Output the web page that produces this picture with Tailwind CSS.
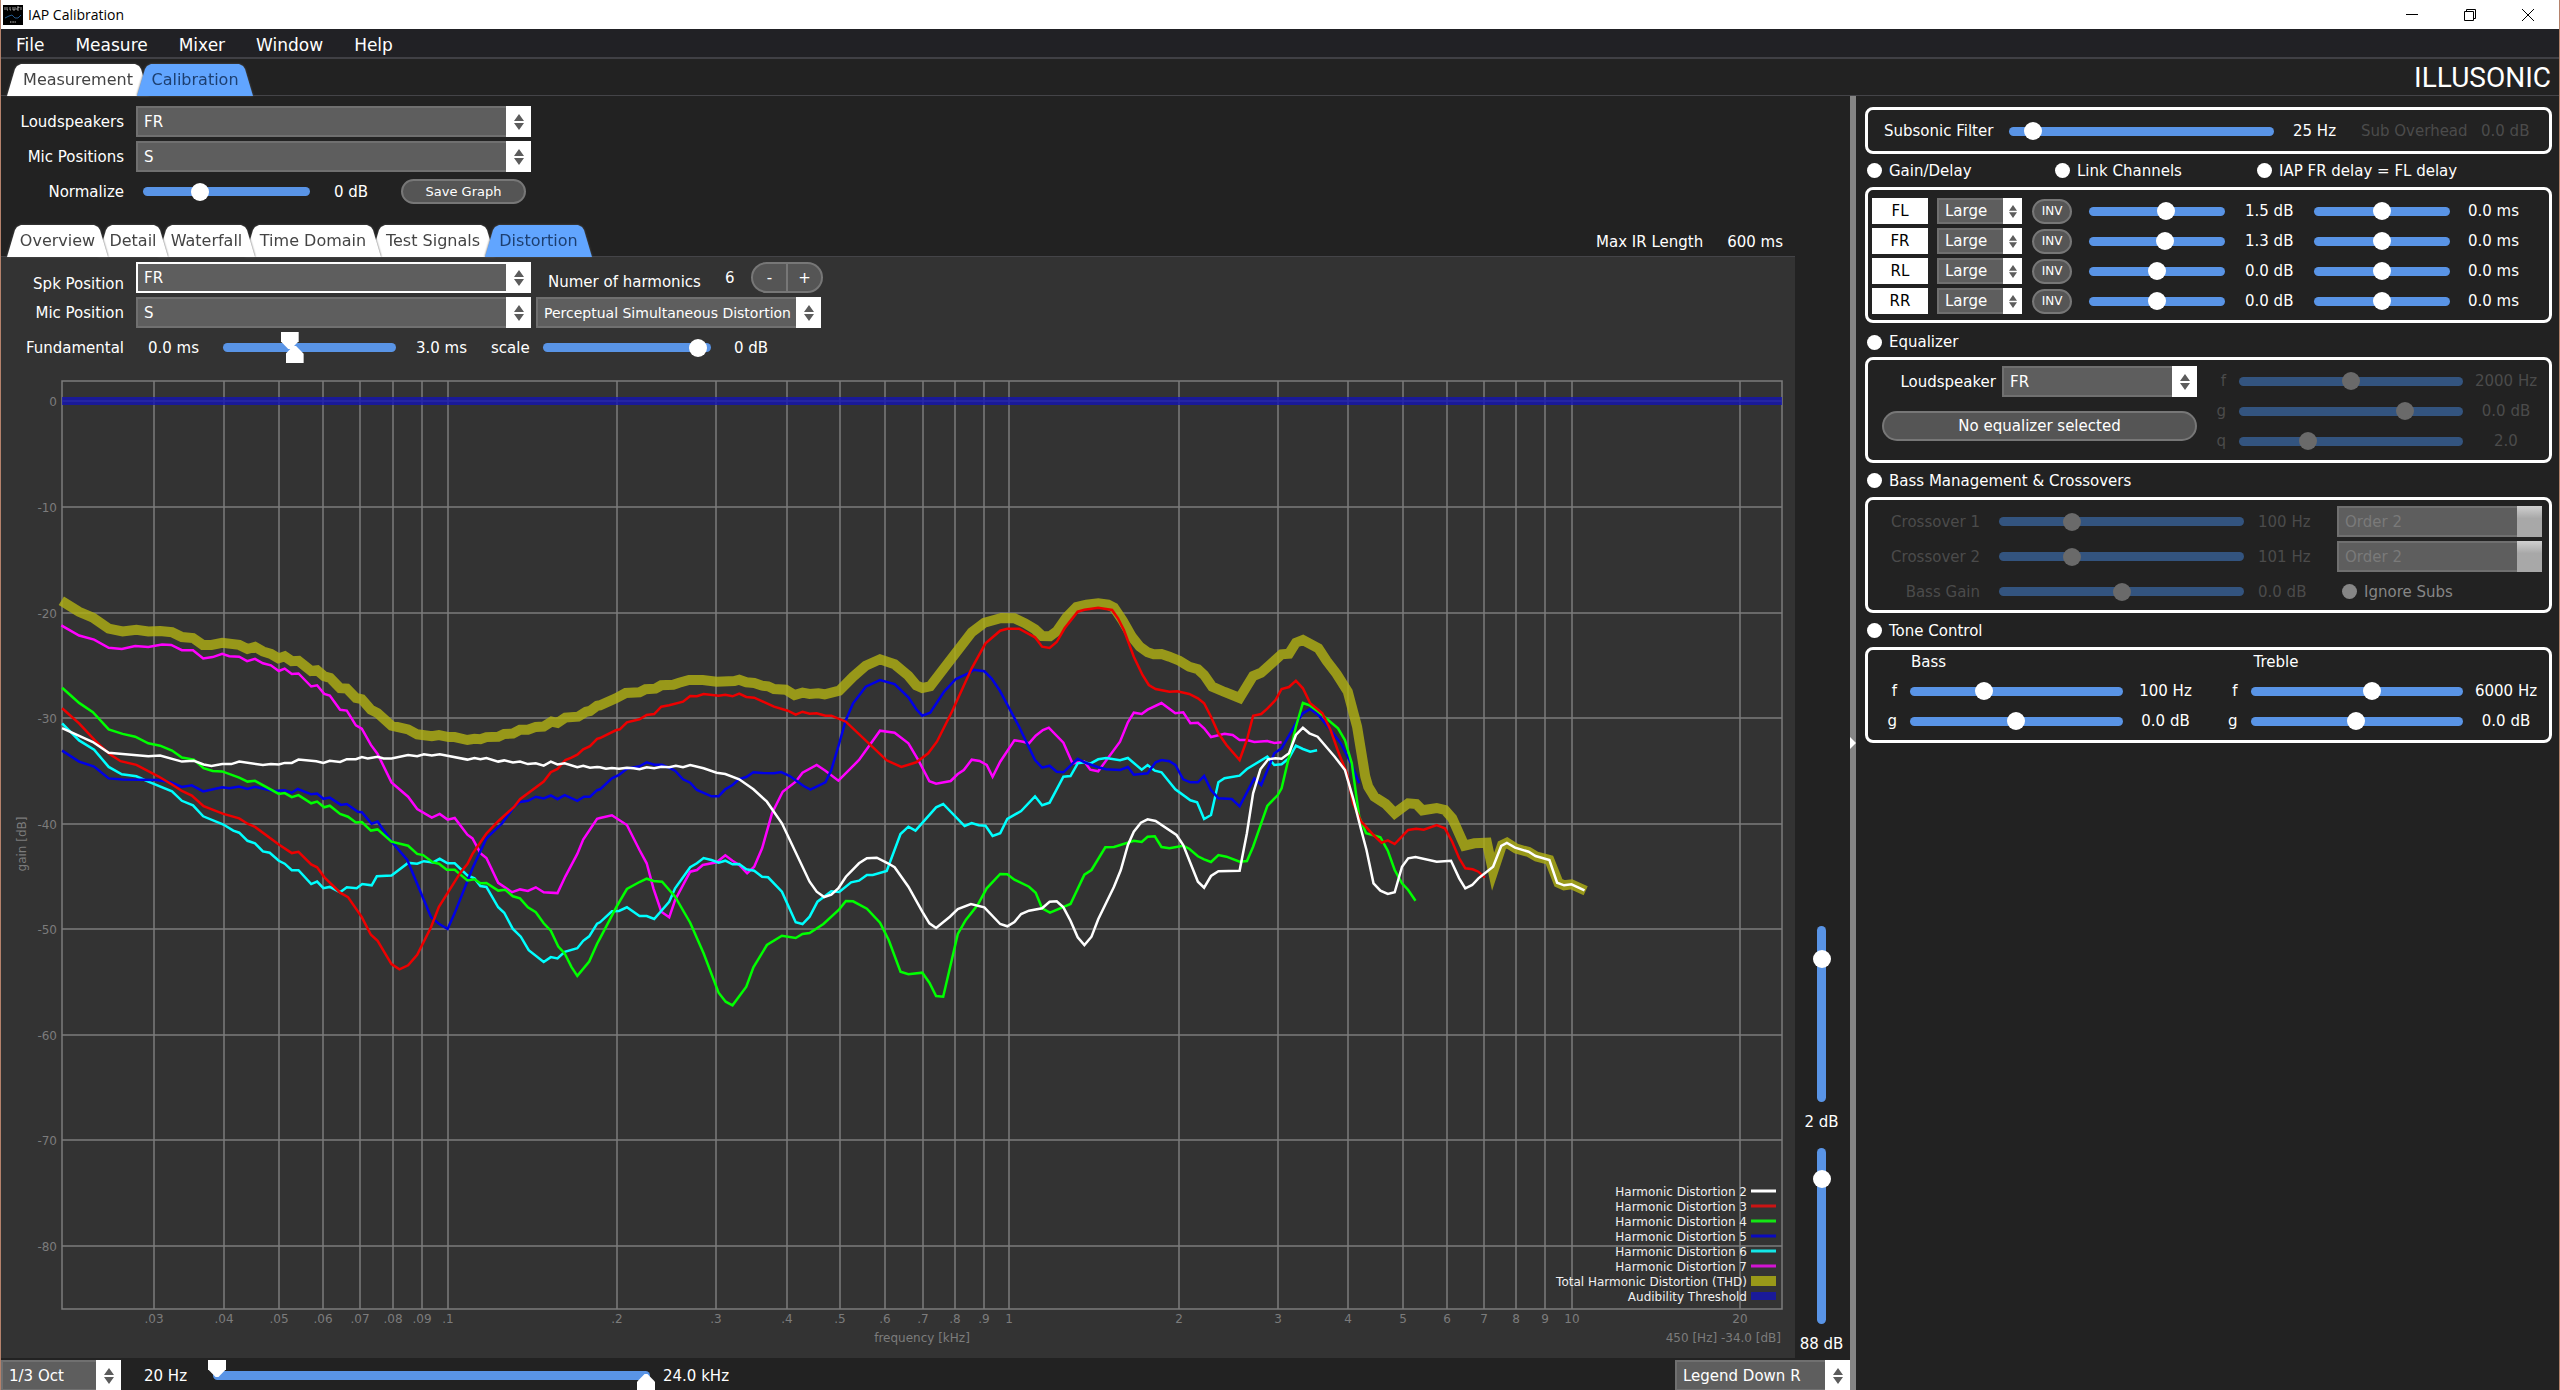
<!DOCTYPE html>
<html lang="en">
<head>
  <meta charset="UTF-8" />
  <title>IAP Calibration</title>
  <script src="https://cdn.jsdelivr.net/npm/@tailwindcss/browser@4"></script>
</head>
<body class="h-screen overflow-hidden flex flex-col bg-[#222222] text-white text-[15px] leading-5 font-['DejaVu_Sans',sans-serif] border-x border-[#b5826c]">

  <!-- Title bar -->
  <header class="h-[29px] shrink-0 bg-white text-black flex items-center pl-[2px] pr-[2px]">
    <svg class="size-5" viewBox="0 0 20 20">
      <rect width="20" height="20" fill="#000" />
      <path d="M2 2v3M4 2v3h1M7 2v3h1M10 2v3h2V2M14 2h2v1h-2v2h2M18 2v3" fill="none" stroke="#bbb" stroke-width=".8" />
      <path d="M2 13l4-2 3-1 3 3 3 0 3-3" fill="none" stroke="#2b6fb0" stroke-width=".8" />
      <path d="M7 17h6" stroke="#888" stroke-width="1.5" stroke-dasharray="1 .6" />
    </svg>
    <h1 class="ml-[5px] text-[14px] font-['Open_Sans',sans-serif]">IAP Calibration</h1>
    <div class="ml-auto flex h-full">
      <button aria-label="Minimize" class="w-[58px] flex items-center justify-center"><svg class="size-3" viewBox="0 0 12 12"><path d="M0 5.5h12" stroke="#000" /></svg></button>
      <button aria-label="Restore" class="w-[58px] flex items-center justify-center"><svg class="size-3" viewBox="0 0 12 12"><path d="M.5 2.5h9v9h-9zM2.5 2.5v-2h9v9h-2" fill="none" stroke="#000" /></svg></button>
      <button aria-label="Close" class="w-[58px] flex items-center justify-center"><svg class="size-3" viewBox="0 0 12 12"><path d="M0 0l12 12M12 0L0 12" stroke="#000" /></svg></button>
    </div>
  </header>

  <!-- Menu -->
  <nav class="h-[30px] shrink-0 bg-[#212125] border-b-2 border-[#404045] flex items-center gap-[31px] pl-[15px] pt-[3px] text-[17px]">
    <button>File</button>
    <button>Measure</button>
    <button>Mixer</button>
    <button>Window</button>
    <button>Help</button>
  </nav>

  <!-- Main tabs -->
  <div class="h-[37px] shrink-0 border-b border-[#444448] flex items-end justify-between pl-[6px] pr-2">
    <div class="tabs flex -mb-px isolate text-[16px] text-[#444444]">
      <button class="relative h-8 w-[142px]"><span class="relative">Measurement</span></button>
      <button data-active class="relative h-8 w-[116px] -ml-3 text-[#1d3f70]"><span class="relative">Calibration</span></button>
    </div>
    <div class="text-[28px] leading-8 pb-px font-['Roboto',sans-serif]">ILLUSONIC</div>
  </div>

  <div class="flex-1 min-h-0 flex">

    <!-- Left: graph side -->
    <main class="flex-1 min-w-0 flex flex-col">
      <div class="flex-1 min-h-0 flex">
        <div class="flex-1 min-w-0 flex flex-col">

          <div class="flex flex-col gap-1 pt-[10px]">
            <div class="flex items-center">
              <label for="spk" class="w-[123px] mr-3 text-right">Loudspeakers</label>
              <select id="spk" class="w-[395px] h-[31px]"><option>FR</option></select>
            </div>
            <div class="flex items-center">
              <label for="mic" class="w-[123px] mr-3 text-right">Mic Positions</label>
              <select id="mic" class="w-[395px] h-[31px]"><option>S</option></select>
            </div>
            <div class="flex items-center h-[31px]">
              <label for="norm" class="w-[123px] mr-3 text-right">Normalize</label>
              <input id="norm" type="range" step="any" value="32" class="ml-[7px] w-[167px]" />
              <span class="ml-6 w-[67px]">0 dB</span>
              <button class="w-[125px] h-[25px] rounded-full bg-[#555555] border-2 border-[#777777] text-[13px] leading-5">Save Graph</button>
            </div>
          </div>

          <div class="mt-[18px] h-8 border-b border-[#444448] flex items-end justify-between pl-[6px] pr-3">
            <div class="tabs flex -mb-px isolate text-[16px] text-[#444444]">
              <button class="relative h-8 w-[101px]"><span class="relative">Overview</span></button>
              <button class="relative h-8 w-[70px] -ml-[10px]"><span class="relative">Detail</span></button>
              <button class="relative h-8 w-[97px] -ml-[10px]"><span class="relative">Waterfall</span></button>
              <button class="relative h-8 w-[136px] -ml-[10px]"><span class="relative">Time Domain</span></button>
              <button class="relative h-8 w-[124px] -ml-[10px]"><span class="relative">Test Signals</span></button>
              <button data-active class="relative h-8 w-[107px] -ml-[10px] text-[#1d3f70]"><span class="relative">Distortion</span></button>
            </div>
            <div class="flex gap-6 pb-1"><span>Max IR Length</span><span>600 ms</span></div>
          </div>

          <section class="flex-1 min-h-0 flex flex-col bg-[#333333] pt-[5px]">
            <div class="flex flex-col gap-1">
              <div class="flex items-center h-[31px]">
                <label for="spk2" class="w-[123px] mr-3 pt-3 text-right">Spk Position</label>
                <select id="spk2" data-focus class="w-[395px] h-[31px]"><option>FR</option></select>
                <span class="ml-[17px] w-[177px] pt-2">Numer of harmonics</span>
                <output class="w-[26px]">6</output>
                <div class="flex h-[31px] w-[72px] rounded-full bg-[#555555] border-2 border-[#777777] overflow-hidden">
                  <button class="flex-1 border-r-2 border-[#777777]">-</button>
                  <button class="flex-1">+</button>
                </div>
              </div>
              <div class="flex items-center">
                <label for="mic2" class="w-[123px] mr-3 text-right">Mic Position</label>
                <select id="mic2" class="w-[395px] h-[31px]"><option>S</option></select>
                <span class="w-[5px]"></span>
                <select aria-label="Distortion type" class="w-[285px] h-[31px] text-[14px]"><option>Perceptual Simultaneous Distortion</option></select>
              </div>
              <div class="flex items-center h-[31px]">
                <span class="w-[123px] text-right">Fundamental</span>
                <span class="ml-6 w-[75px]">0.0 ms</span>
                <div class="dual relative w-[173px] h-[31px]" data-low="38" data-high="41" data-name="Fundamental"></div>
                <span class="ml-5 w-[75px]">3.0 ms</span>
                <label for="scale" class="w-[52px]">scale</label>
                <input id="scale" type="range" step="any" value="97" class="w-[168px]" />
                <span class="ml-[23px]">0 dB</span>
              </div>
            </div>
            <svg id="chart" class="mt-[7px] w-full flex-1 min-h-0" viewBox="1 370 1794 988" font-size="12" fill="none"></svg>
          </section>
        </div>

        <!-- Vertical zoom sliders -->
        <div class="w-[55px] flex flex-col items-center justify-end pb-1 pr-[2px]">
          <input id="zoomTop" type="range" step="any" value="85" data-vertical class="h-[176px]" />
          <label for="zoomTop" class="mt-[10px] whitespace-nowrap">2 dB</label>
          <input id="zoomBottom" type="range" step="any" value="86" data-vertical class="mt-4 h-[176px]" />
          <label for="zoomBottom" class="mt-[10px] whitespace-nowrap">88 dB</label>
        </div>
      </div>

      <!-- Bottom bar -->
      <div class="relative h-8 shrink-0 pt-[2px] flex items-start overflow-hidden">
        <select aria-label="Smoothing" class="w-[120px] h-[31px]"><option>1/3 Oct</option></select>
        <span class="ml-[23px] w-[69px] leading-8">20 Hz</span>
        <div class="dual relative w-[437px] h-[31px]" data-low="0" data-high="100" data-name="Frequency range"></div>
        <span class="ml-[13px] leading-8">24.0 kHz</span>
        <span class="ml-auto"></span>
        <select aria-label="Legend position" class="w-[175px] h-[31px]"><option>Legend Down R</option></select>
      </div>
    </main>

    <!-- Splitter -->
    <div class="w-[6px] bg-[#858585] flex flex-col justify-center">
      <svg class="w-[6px] h-4" viewBox="0 0 6 16"><path d="M0 2l6 6-6 6z" fill="#fff" /></svg>
    </div>

    <!-- Right: processing side -->
    <aside class="w-[703px] shrink-0 pt-[11px] pl-[9px] pr-[7px]">

      <section class="h-[47px] border-3 border-white rounded-lg flex items-center pl-4 pr-4 pt-px">
        <label for="subsonic" class="w-[125px]">Subsonic Filter</label>
        <input id="subsonic" type="range" step="any" value="6" class="flex-1" />
        <span class="ml-[19px] w-[68px]">25 Hz</span>
        <span class="w-[120px] text-[#4b4b4b]">Sub Overhead</span>
        <span class="w-[52px] text-[#4b4b4b]">0.0 dB</span>
      </section>

      <div class="h-[33px] flex items-center pl-[2px]">
        <label class="flex items-center gap-[7px] w-[188px]"><input type="checkbox" />Gain/Delay</label>
        <label class="flex items-center gap-[7px] w-[202px]"><input type="checkbox" />Link Channels</label>
        <label class="flex items-center gap-[7px]"><input type="checkbox" />IAP FR delay = FL delay</label>
      </div>

      <section id="channels" class="h-[136px] border-3 border-white rounded-lg flex flex-col gap-1 pt-2 pl-1"></section>

      <div class="h-[34px] pt-1 flex items-center pl-[2px]">
        <label class="flex items-center gap-[7px]"><input type="checkbox" />Equalizer</label>
      </div>

      <section class="h-[106px] border-3 border-white rounded-lg flex pt-[6px] pl-[14px]">
        <div class="w-[315px]">
          <div class="flex items-center">
            <label for="eqSpk" class="w-[114px] mr-[6px] text-right">Loudspeaker</label>
            <select id="eqSpk" class="w-[195px] h-[31px]"><option>FR</option></select>
          </div>
          <button class="mt-[14px] w-full h-[30px] rounded-full bg-[#555555] border-2 border-[#777777]">No equalizer selected</button>
        </div>
        <div id="eqBands" class="flex-1 text-[#4b4b4b]"></div>
      </section>

      <div class="h-[34px] pt-px flex items-center pl-[2px]">
        <label class="flex items-center gap-[7px]"><input type="checkbox" />Bass Management &amp; Crossovers</label>
      </div>

      <section class="h-[116px] border-3 border-white rounded-lg flex flex-col gap-1 pt-[6px] pr-[7px] text-[#4b4b4b]">
        <div class="flex items-center h-[31px]">
          <label for="xo1" class="w-[112px] text-right">Crossover 1</label>
          <input id="xo1" type="range" step="any" value="28" disabled class="ml-[19px] flex-1" />
          <span class="ml-[14px] w-[79px]">100 Hz</span>
          <select aria-label="Crossover 1 order" disabled class="w-[205px] h-[31px]"><option>Order 2</option></select>
        </div>
        <div class="flex items-center h-[31px]">
          <label for="xo2" class="w-[112px] text-right">Crossover 2</label>
          <input id="xo2" type="range" step="any" value="28" disabled class="ml-[19px] flex-1" />
          <span class="ml-[14px] w-[79px]">101 Hz</span>
          <select aria-label="Crossover 2 order" disabled class="w-[205px] h-[31px]"><option>Order 2</option></select>
        </div>
        <div class="flex items-center h-[31px]">
          <label for="bassGain" class="w-[112px] text-right">Bass Gain</label>
          <input id="bassGain" type="range" step="any" value="50" disabled class="ml-[19px] flex-1" />
          <span class="ml-[14px] w-[79px]">0.0 dB</span>
          <label class="flex items-center gap-[7px] w-[205px] pl-[5px] text-[#868686]"><input type="checkbox" disabled />Ignore Subs</label>
        </div>
      </section>

      <div class="h-[34px] pt-px flex items-center pl-[2px]">
        <label class="flex items-center gap-[7px]"><input type="checkbox" />Tone Control</label>
      </div>

      <section class="h-[96px] border-3 border-white rounded-lg flex">
        <div class="flex-1">
          <h2 class="h-[26px] pt-[2px] pl-[43px]">Bass</h2>
          <div id="bassBands"></div>
        </div>
        <div class="flex-1">
          <h2 class="h-[26px] pt-[2px] pl-[45px]">Treble</h2>
          <div id="trebleBands"></div>
        </div>
      </section>
    </aside>
  </div>

<script>
  const $ = id => document.getElementById(id);

  // ---- channel strips ----
  const channels = [
    ["FL", 57.6, "1.5 dB"],
    ["FR", 57, "1.3 dB"],
    ["RL", 50, "0.0 dB"],
    ["RR", 50, "0.0 dB"]
  ];
  $("channels").innerHTML = channels.map(([name, gain, db]) => `
    <div class="flex items-center h-[26px]">
      <button class="w-14 h-[26px] bg-white text-black">${name}</button>
      <span class="w-[9px]"></span>
      <select aria-label="${name} size" data-small class="w-[85px] h-[26px]"><option>Large</option></select>
      <button class="ml-[10px] w-10 h-[25px] rounded-full bg-[#555555] border-2 border-[#777777] text-[12px] leading-5">INV</button>
      <input type="range" step="any" value="${gain}" aria-label="${name} gain" class="ml-[17px] flex-1 min-w-0" />
      <span class="ml-5 w-[69px]">${db}</span>
      <input type="range" step="any" value="50" aria-label="${name} delay" class="flex-1 min-w-0" />
      <span class="ml-[18px] w-[81px]">0.0 ms</span>
    </div>`).join("");

  // ---- f / g / q slider rows ----
  function bands(id, rows, disabled) {
    $(id).innerHTML = rows.map(([name, pos, text]) => `
      <div class="flex items-center h-[30px]">
        <label for="${id}-${name}" class="w-[29px] text-right">${name}</label>
        <input id="${id}-${name}" type="range" step="any" value="${pos}" ${disabled ? "disabled" : ""} class="ml-[13px] flex-1 min-w-0" />
        <span class="w-[86px] text-center">${text}</span>
      </div>`).join("");
  }
  bands("eqBands", [["f", 50, "2000 Hz"], ["g", 76, "0.0 dB"], ["q", 29, "2.0"]], true);
  bands("bassBands", [["f", 33.5, "100 Hz"], ["g", 50, "0.0 dB"]]);
  bands("trebleBands", [["f", 57.7, "6000 Hz"], ["g", 49.5, "0.0 dB"]]);

  // ---- tabs: each one overlaps the next, the active one lies on top ----
  document.querySelectorAll(".tabs").forEach(bar => {
    [...bar.children].forEach((tab, i, all) => {
      const active = "active" in tab.dataset;
      tab.style.zIndex = active ? all.length + 1 : all.length - i;
      tab.className += " drop-shadow-[0_0_1px_#555555]";
      tab.insertAdjacentHTML("afterbegin", `<span class="${active ? "bg-[#61a5ff]" : "bg-white"} absolute inset-0 [clip-path:polygon(0_100%,8px_5px,10px_2px,14px_0,calc(100%-14px)_0,calc(100%-10px)_2px,calc(100%-8px)_5px,100%_100%)]"></span>`);
    });
  });

  // ---- drop-downs ----
  document.querySelectorAll("select").forEach(sel => {
    const small = "small" in sel.dataset;
    const box = document.createElement("div");
    box.className = "relative shrink-0";
    sel.replaceWith(box);
    box.append(sel);
    sel.className += " block appearance-none pl-[6px] border-2 bg-[#5e5e5e] " +
      ("focus" in sel.dataset ? "border-white" : "border-[#707070] disabled:text-[#7a7a7a]");
    box.insertAdjacentHTML("beforeend", sel.disabled
      ? `<span class="absolute right-0 inset-y-0 w-[25px] bg-linear-to-b from-[#d0d0d0] to-[#a8a8a8] to-40%"></span>`
      : `<span class="${small ? "absolute right-0 inset-y-0 w-[19px] bg-white flex items-center justify-center pointer-events-none" : "absolute right-0 inset-y-0 w-[25px] bg-white flex items-center justify-center pointer-events-none"}">
           <svg class="${small ? "w-2 h-[13px]" : "w-[10px] h-4"}" viewBox="0 0 10 16"><path d="M5 0l5 7H0zM5 16l5-7H0z" fill="#5c5c5c" /></svg>
         </span>`);
  });

  // ---- sliders and check boxes ----
  document.querySelectorAll("input[type=range]").forEach(r => {
    r.className += " block appearance-none rounded-full bg-[#5994e6] disabled:bg-[#33547f] [&::-webkit-slider-thumb]:appearance-none [&::-webkit-slider-thumb]:size-[18px] [&::-webkit-slider-thumb]:rounded-full [&::-webkit-slider-thumb]:bg-white disabled:[&::-webkit-slider-thumb]:bg-[#6a6a6a]" +
      ("vertical" in r.dataset ? " w-[9px] [writing-mode:vertical-lr] [direction:rtl]" : " h-[9px]");
  });
  document.querySelectorAll("input[type=checkbox]").forEach(c => {
    c.className = "appearance-none size-[15px] rounded-full bg-white disabled:bg-[#868686]";
  });

  // range with two pointed handles, one from above and one from below
  document.querySelectorAll(".dual").forEach(d => {
    d.innerHTML = `
      <div class="absolute inset-x-0 top-[11px] h-[9px] rounded-full bg-[#5994e6]"></div>
      <input type="range" step="any" value="${d.dataset.low}" aria-label="${d.dataset.name} from" class="absolute -left-[5px] top-0 w-[calc(100%+10px)] h-[17px] appearance-none bg-transparent [&::-webkit-slider-thumb]:appearance-none [&::-webkit-slider-thumb]:w-[18px] [&::-webkit-slider-thumb]:h-[17px] [&::-webkit-slider-thumb]:bg-white [&::-webkit-slider-thumb]:[clip-path:polygon(0_0,100%_0,100%_55%,58%_100%,42%_100%,0_55%)]" />
      <input type="range" step="any" value="${d.dataset.high}" aria-label="${d.dataset.name} to" class="absolute -left-[5px] bottom-0 w-[calc(100%+10px)] h-[17px] appearance-none bg-transparent [&::-webkit-slider-thumb]:appearance-none [&::-webkit-slider-thumb]:w-[18px] [&::-webkit-slider-thumb]:h-[17px] [&::-webkit-slider-thumb]:bg-white [&::-webkit-slider-thumb]:[clip-path:polygon(0_100%,100%_100%,100%_45%,58%_0,42%_0,0_45%)]" />`;
  });

  // ---- distortion graph ----
  // every trace is three runs (bass, mid, treble), each run has its own origin and scale
  const runs = [
    { x: 0, y: 360, kx: 2.529, ky: 2.45 },
    { x: 600, y: 560, kx: 2.529, ky: 3 },
    { x: 1200, y: 560, kx: 2.45, ky: 3 }
  ];

  const traces = [
    { color: "#b2b213", width: 10, opacity: .8, data: [
      "155,590 200,617 235,631 275,658 310,665 345,661 375,665 405,664 435,667 460,679 488,681 513,698 535,698 562,693 605,698 626,708 645,703 665,714 685,720 704,731 720,726 738,738 755,737 787,762 802,760 820,775 835,779 860,804 877,805 900,828 915,831 938,857 955,865 990,896 1032,905 1055,917 1092,922 1110,919 1135,924 1150,924 1182,931 1200,928 1215,929 1230,924 1260,923 1275,916 1297,915 1315,906 1335,906 1355,899 1375,898 1395,886 1410,889 1430,876 1462,874 1482,862 1492,860 1510,847",
      "0,436 40,415 65,399 100,397 115,388 140,386 155,376 185,374 200,368 225,360 260,360 295,365 340,363 352,359 370,367 390,369 410,377 425,379 440,387 470,389 492,405 512,398 530,402 552,400 568,403 605,392 640,350 672,317 708,298 745,313 780,347 800,376 815,384 835,379 870,325 940,217 972,188 1015,174 1048,175 1075,190 1100,208 1118,228 1138,229 1155,214 1180,172 1205,141 1230,134 1260,130 1285,134 1300,143 1322,182 1345,230 1365,260 1385,277 1400,283 1420,282 1440,290 1465,302 1490,320 1512,328",
      "10,345 30,380 60,396 97,414 130,348 150,338 165,322 200,283 218,281 235,248 252,240 290,265 310,302 335,342 362,395 385,500 405,650 412,680 427,710 455,732 477,760 510,730 530,732 545,751 580,744 600,750 618,775 648,857 672,850 703,848 718,935 740,855 752,848 775,866 805,876 825,890 856,900 878,968 892,976 910,973 945,992"] },
    { color: "#ff00ff", width: 2.5, data: [
      "155,650 200,675 238,685 275,705 308,708 342,701 375,703 410,697 433,698 460,711 488,711 514,731 538,728 562,720 580,726 605,727 625,738 645,732 665,743 685,748 705,762 720,756 738,769 755,768 787,800 802,797 820,818 834,822 860,857 877,859 900,895 915,903 938,943 955,965 990,1035 1032,1070 1055,1100 1092,1121 1112,1112 1132,1126 1150,1122 1182,1163 1195,1172 1215,1208 1230,1220 1260,1281 1295,1304 1315,1297 1335,1301 1355,1292 1375,1304 1410,1306 1430,1265 1460,1210 1475,1175 1510,1124",
      "0,774 30,766 68,795 100,870 118,910 135,985 155,1055 175,1072 190,1020 228,935 245,930 260,915 295,907 317,886 335,902 352,915 372,940 390,920 410,865 435,760 462,695 495,665 512,638 548,615 570,632 603,662 655,600 708,512 745,518 780,550 805,600 833,664 850,671 887,663 905,642 920,630 940,599 960,603 978,615 993,650 1012,605 1048,541 1070,545 1085,550 1102,527 1120,510 1135,503 1172,548 1195,610 1225,605 1240,629 1260,634 1315,545 1335,487 1350,458 1370,462 1385,449 1420,429 1455,460 1475,457 1493,490 1512,488",
      "10,505 27,531 60,521 80,525 97,540 115,540 133,546 165,543 182,549 200,547"] },
    { color: "#00ffff", width: 2.5, data: [
      "157,890 200,932 238,955 275,997 308,1015 345,1020 375,1033 435,1057 460,1080 488,1091 514,1118 565,1138 590,1153 605,1158 626,1178 645,1184 665,1204 682,1207 705,1227 720,1234 738,1250 755,1250 787,1284 802,1278 818,1294 834,1291 860,1304 877,1292 902,1294 916,1284 940,1287 953,1265 990,1263 1032,1232 1055,1234 1072,1228 1095,1231 1112,1222 1132,1233 1150,1233 1182,1263 1200,1270 1215,1289 1230,1291 1260,1341 1275,1354 1297,1394 1317,1413 1337,1446 1375,1475 1393,1463 1410,1466 1428,1450 1460,1441 1475,1423 1490,1412 1510,1381",
      "0,1087 30,1054 48,1053 68,1042 100,1068 118,1068 137,1077 175,1025 190,985 228,922 245,910 262,894 282,900 300,908 317,902 335,913 352,912 370,928 390,932 410,950 425,952 460,995 495,1087 512,1092 530,1070 550,1025 585,994 605,996 635,967 655,962 675,945 690,945 725,933 760,822 780,800 798,812 850,742 868,732 922,798 940,789 958,796 975,797 993,828 1012,820 1030,777 1065,753 1100,709 1118,736 1137,728 1172,650 1190,648 1208,610 1225,607 1240,611 1260,598 1280,594 1315,601 1335,594 1370,629 1385,615 1403,632 1420,637 1455,688 1493,721 1510,727",
      "10,777 27,765 45,667 60,655 97,647 115,627 165,590 182,615 200,613 218,595 235,557 252,567 270,575 287,571"] },
    { color: "#0000e6", width: 2.5, data: [
      "157,957 200,984 238,996 275,1025 310,1028 395,1029 430,1034 460,1046 485,1042 514,1057 562,1047 580,1049 605,1045 626,1051 645,1046 690,1056 720,1054 738,1060 753,1051 787,1064 802,1062 818,1075 834,1072 862,1090 877,1088 905,1107 915,1108 940,1136 955,1131 990,1180 1030,1225 1060,1295 1090,1365 1110,1381 1132,1394 1150,1355 1195,1245 1230,1172 1270,1135 1300,1095 1315,1083 1335,1080 1355,1070 1375,1074 1393,1067 1410,1076 1428,1066 1460,1080 1477,1070 1492,1070 1510,1054",
      "0,688 30,655 48,645 68,626 100,619 118,607 137,614 157,614 190,632 210,658 228,668 245,690 282,709 300,709 317,688 335,675 352,657 370,651 388,637 410,639 440,640 458,636 480,648 515,678 532,689 570,667 585,630 605,550 622,480 640,430 672,380 708,360 745,372 780,412 800,448 815,467 835,458 870,395 900,357 935,338 945,329 972,334 990,355 1010,390 1060,500 1100,600 1118,623 1137,617 1155,635 1172,637 1208,596 1225,607 1260,622 1280,628 1315,630 1335,621 1350,644 1385,640 1405,607 1420,600 1440,604 1455,615 1475,658 1493,667 1512,667",
      "10,648 27,690 45,715 78,717 97,739 133,655 150,675 182,580 200,565 235,490 252,460 270,447 290,465 320,510 345,550 370,610 390,670"] },
    { color: "#00ff00", width: 2.5, data: [
      "157,803 200,840 235,863 275,905 310,916 342,923 375,939 405,945 435,957 460,974 490,979 515,1000 538,1007 562,1008 605,1023 626,1033 645,1031 705,1063 720,1061 738,1071 755,1066 787,1086 802,1082 820,1096 834,1092 860,1112 880,1119 900,1133 915,1132 938,1153 955,1150 990,1180 1032,1190 1055,1210 1070,1213 1095,1231 1110,1234 1130,1249 1150,1249 1182,1275 1200,1272 1215,1282 1230,1281 1260,1300 1278,1298 1297,1314 1315,1319 1335,1341 1355,1353 1375,1380 1393,1398 1412,1437 1428,1454 1445,1487 1460,1509 1490,1474 1510,1430",
      "0,1135 42,1040 68,987 100,966 118,956 135,963 157,965 190,1010 228,1088 262,1180 300,1298 318,1325 335,1336 370,1280 388,1222 422,1155 460,1127 495,1134 512,1122 530,1119 565,1092 605,1048 622,1023 640,1024 675,1046 708,1088 730,1140 760,1235 780,1243 815,1238 833,1268 850,1308 868,1310 905,1122 925,1080 955,1035 978,985 1012,942 1030,943 1048,959 1085,980 1102,998 1118,1045 1138,1058 1190,1032 1225,944 1243,930 1278,862 1300,861 1350,842 1370,846 1385,830 1403,829 1420,861 1440,865 1475,857 1490,866 1512,889",
      "10,898 27,906 45,885 65,890 97,905 115,903 130,860 150,790 165,738 180,718 190,706 200,685 218,590 235,500 252,429 270,437 290,455 338,505 355,540 372,610 390,770 407,820 442,832 460,872 477,930 495,970 510,990 528,1022"] },
    { color: "#ee0000", width: 2.5, data: [
      "157,853 200,890 240,932 278,966 305,983 345,992 400,1020 435,1040 460,1056 485,1067 515,1093 565,1112 605,1123 626,1136 645,1144 705,1187 738,1208 755,1205 787,1236 802,1243 820,1267 860,1305 880,1316 915,1365 938,1408 955,1423 990,1480 1010,1493 1032,1483 1055,1457 1090,1390 1110,1340 1165,1255 1182,1235 1195,1210 1230,1160 1260,1130 1300,1095 1315,1076 1375,1033 1393,1010 1410,1002 1430,980 1445,974 1460,967 1475,954 1492,946 1510,928",
      "0,534 40,511 50,508 68,487 100,478 118,465 137,462 155,440 175,436 210,425 228,408 245,409 262,402 300,407 317,404 335,409 352,401 370,411 390,413 422,430 440,440 475,452 495,464 512,455 530,461 548,460 570,467 585,467 622,485 675,545 725,601 762,621 800,607 830,580 852,545 890,455 940,325 975,250 1012,212 1030,206 1060,206 1100,232 1118,260 1137,264 1155,246 1175,205 1208,155 1225,149 1260,143 1295,150 1310,175 1325,210 1350,290 1372,345 1388,375 1405,387 1440,395 1460,394 1490,402 1512,415",
      "10,430 27,470 45,520 65,555 97,600 115,540 130,467 150,462 165,446 185,420 200,387 218,381 235,362 252,385 270,430 300,460 320,510 340,580 360,640 375,730 395,785 425,825 445,848 460,841 477,852 510,810 530,806 548,809 580,795 600,805 618,845 635,895 650,925 668,928 682,935 698,953"] },
    { color: "#ffffff", width: 2.5, data: [
      "157,902 235,936 275,962 310,965 375,971 405,969 460,984 490,982 515,991 535,995 562,990 585,990 605,984 665,992 685,990 705,991 720,987 738,987 755,979 800,983 818,987 834,982 860,985 877,978 900,978 915,973 930,976 955,972 970,976 990,976 1032,968 1055,971 1072,966 1092,969 1112,966 1182,979 1200,975 1215,978 1230,975 1260,984 1275,981 1297,986 1315,984 1335,990 1355,988 1375,994 1393,984 1410,991 1428,988 1460,998 1475,994 1492,999 1510,997",
      "0,622 15,626 30,624 48,626 68,623 85,625 100,628 118,622 137,625 155,620 175,622 192,617 210,622 228,615 262,625 295,638 317,642 352,658 388,688 422,725 460,790 530,965 548,995 567,1011 585,1004 603,985 622,950 655,910 675,895 700,893 728,910 745,922 780,980 815,1055 833,1090 850,1104 885,1070 905,1047 938,1032 972,1042 1012,1092 1030,1099 1048,1086 1065,1062 1085,1052 1118,1045 1137,1025 1155,1024 1172,1042 1190,1082 1208,1132 1225,1155 1243,1130 1260,1078 1300,980 1317,930 1335,855 1350,815 1368,788 1385,778 1405,783 1458,825 1475,855 1512,965",
      "10,983 27,948 45,934 97,932 115,820 130,700 148,628 167,598 185,595 200,596 218,580 235,525 252,503 268,520 288,530 330,590 355,630 375,715 395,810 408,870 425,970 442,992 460,1002 477,997 495,920 510,895 528,891 580,905 615,902 635,955 650,985 667,975 682,955 718,920 738,858 752,849 772,863 805,875 822,888 856,900 875,968 892,976 910,973 942,991"] }
  ];

  const left = 62, right = 1782, top_ = 381, bottom = 1309;
  const xTicks = [[".03", 154], [".04", 224], [".05", 279], [".06", 323], [".07", 360], [".08", 393], [".09", 422], [".1", 448],
    [".2", 617], [".3", 716], [".4", 787], [".5", 840], [".6", 885], [".7", 923], [".8", 955], [".9", 984], ["1", 1009],
    ["2", 1179], ["3", 1278], ["4", 1348], ["5", 1403], ["6", 1447], ["7", 1484], ["8", 1516], ["9", 1545], ["10", 1572], ["20", 1740]];
  const yTicks = [["0", 401], ["-10", 507], ["-20", 613], ["-30", 718], ["-40", 824], ["-50", 929], ["-60", 1035], ["-70", 1140], ["-80", 1246]];
  const legend = [
    ["Harmonic Distortion 2", "#ffffff", 3],
    ["Harmonic Distortion 3", "#cc1414", 3],
    ["Harmonic Distortion 4", "#14e614", 3],
    ["Harmonic Distortion 5", "#0a0ac0", 3],
    ["Harmonic Distortion 6", "#14e6e6", 3],
    ["Harmonic Distortion 7", "#d214d2", 3],
    ["Total Harmonic Distortion (THD)", "#999919", 10],
    ["Audibility Threshold", "#1a1a99", 8]
  ];

  let svg = `<rect x="${left}" y="${top_}" width="${right - left}" height="${bottom - top_}" stroke="#7c7c7c" stroke-width="1.5" />`;
  xTicks.forEach(([t, x]) => {
    svg += `<path d="M${x} ${top_}V${bottom}" stroke="#7c7c7c" stroke-width="1.5" />
      <text x="${x}" y="1323" fill="#7c7c7c" text-anchor="middle">${t}</text>`;
  });
  yTicks.forEach(([t, y]) => {
    svg += `<path d="M${left} ${y}H${right}" stroke="#7c7c7c" stroke-width="1.5" />
      <text x="57" y="${y + 5}" fill="#7c7c7c" text-anchor="end">${t}</text>`;
  });
  svg += `<path d="M${left} 401H${right}" stroke="#1414b2" stroke-width="8" stroke-opacity=".8" />`;
  traces.forEach(t => {
    const pts = t.data.map((s, i) => s.split(" ").map(p => {
      const [x, y] = p.split(",");
      return (runs[i].x + x / runs[i].kx).toFixed(1) + "," + (runs[i].y + y / runs[i].ky).toFixed(1);
    }).join(" ")).join(" ");
    svg += `<polyline points="${pts}" stroke="${t.color}" stroke-width="${t.width}" stroke-opacity="${t.opacity || 1}" />`;
  });
  legend.forEach(([t, color, h], i) => {
    const y = 1191 + i * 15;
    svg += `<text x="1747" y="${y + 5}" fill="#f0f0f0" text-anchor="end">${t}</text>
      <path d="M1751 ${y}h25" stroke="${color}" stroke-width="${h}" />`;
  });
  svg += `<text x="922" y="1342" fill="#7c7c7c" text-anchor="middle">frequency [kHz]</text>
    <text x="1781" y="1342" fill="#7c7c7c" text-anchor="end">450 [Hz] -34.0 [dB]</text>
    <text transform="translate(26 844) rotate(-90)" fill="#7c7c7c" text-anchor="middle">gain [dB]</text>`;
  $("chart").innerHTML = svg;
</script>

</body>
</html>
